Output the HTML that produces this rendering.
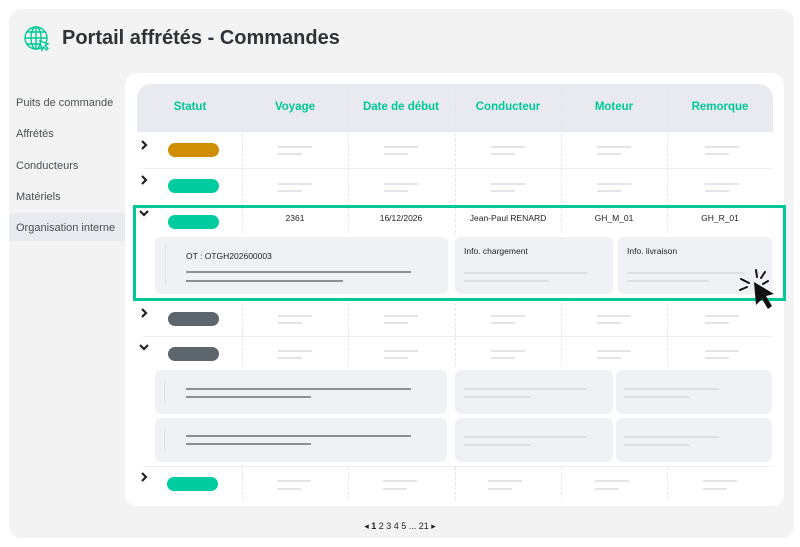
<!DOCTYPE html>
<html><head><meta charset="utf-8"><style>
*{margin:0;padding:0;box-sizing:border-box}
body{width:800px;height:547px;background:#fff;font-family:"Liberation Sans",sans-serif;position:relative;overflow:hidden}
.a{position:absolute}
.card{left:9px;top:9px;width:785px;height:529px;background:#f3f3f4;border-radius:12px}
.title{left:62px;top:27px;font-size:20px;font-weight:bold;color:#2f3338}
.nav{left:16px;font-size:11px;color:#4a4f55}
.sel{left:9px;top:213px;width:116px;height:28px;background:#e8eaf0}
.panel{left:125px;top:73px;width:659px;height:433px;background:#fff;border-radius:12px}
.head{left:137px;top:84px;width:636px;height:48px;background:#e8eaf0;border-radius:14px 14px 0 0}
.th{top:101px;font-size:11.5px;font-weight:bold;color:#00c896;text-align:center;width:106px}
.vl{width:0;border-left:1px dashed #e4e6ea}
.hl{height:1px;background:#eceef0}
.pill{width:51px;height:14px;border-radius:7px}
.l1{height:2px;width:34px;background:#e2e4e7}
.l2{height:2px;width:24px;background:#e2e4e7}
.chev{left:140px}
.box{background:#eff1f4;border-radius:6px}
.td{font-size:8.5px;color:#1d1f22;text-align:center;width:106px;top:213px}
.dk{height:2px;background:#8c9095}
.lt{height:2px;background:#dcdfe3}
</style></head><body>
<div class="a card"></div>
<svg class="a" style="left:23px;top:25px" width="28" height="28" viewBox="0 0 28 28" fill="none" stroke="#00c896" stroke-width="1.4"><circle cx="13" cy="13" r="11"/><ellipse cx="13" cy="13" rx="5" ry="11"/><path d="M2 13h22M4 7h18M4 19h14M13 2v22"/><path d="M17 16l8 3-3 1.5 3 3-1.5 1.5-3-3L19 25z" fill="#fff"/></svg>
<div class="a title">Portail affrétés - Commandes</div>
<div class="a sel"></div>
<div class="a nav" style="top:97px">Puits de commande</div>
<div class="a nav" style="top:128px">Affrétés</div>
<div class="a nav" style="top:160px">Conducteurs</div>
<div class="a nav" style="top:191px">Matériels</div>
<div class="a nav" style="top:222px">Organisation interne</div>
<div class="a panel"></div>
<div class="a head"></div>
<div class="a th" style="left:137px">Statut</div>
<div class="a th" style="left:242px">Voyage</div>
<div class="a th" style="left:348px">Date de début</div>
<div class="a th" style="left:455px">Conducteur</div>
<div class="a th" style="left:561px">Moteur</div>
<div class="a th" style="left:667px">Remorque</div>
<div class="a vl" style="left:242px;top:84px;height:416px"></div>
<div class="a vl" style="left:348px;top:84px;height:416px"></div>
<div class="a vl" style="left:455px;top:84px;height:416px"></div>
<div class="a vl" style="left:561px;top:84px;height:416px"></div>
<div class="a vl" style="left:667px;top:84px;height:416px"></div>
<div class="a hl" style="left:143px;top:168px;width:630px"></div>
<div class="a hl" style="left:143px;top:336px;width:630px"></div>
<div class="a hl" style="left:143px;top:466px;width:630px"></div>
<svg class="a chev" style="top:140px" width="8" height="10"><path d="M2 1l4 4-4 4" fill="none" stroke="#222" stroke-width="2.2"/></svg>
<div class="a pill" style="left:168px;top:143px;background:#d08e04"></div>
<svg class="a chev" style="top:175px" width="8" height="10"><path d="M2 1l4 4-4 4" fill="none" stroke="#222" stroke-width="2.2"/></svg>
<div class="a pill" style="left:168px;top:179px;background:#00cc9f"></div>
<div class="a" style="left:133px;top:205px;width:653px;height:96px;background:#fff;border:3px solid #00c896"></div>
<div class="a vl" style="left:242px;top:208px;height:25px"></div>
<div class="a vl" style="left:348px;top:208px;height:25px"></div>
<div class="a vl" style="left:455px;top:208px;height:25px"></div>
<div class="a vl" style="left:561px;top:208px;height:25px"></div>
<div class="a vl" style="left:667px;top:208px;height:25px"></div>
<svg class="a" style="left:139px;top:209px" width="10" height="8"><path d="M1 2l4 4 4-4" fill="none" stroke="#222" stroke-width="2.2"/></svg>
<div class="a pill" style="left:168px;top:215px;background:#00cc9f"></div>
<div class="a td" style="left:242px">2361</div>
<div class="a td" style="left:348px">16/12/2026</div>
<div class="a td" style="left:455px">Jean-Paul RENARD</div>
<div class="a td" style="left:561px">GH_M_01</div>
<div class="a td" style="left:667px">GH_R_01</div>
<div class="a box" style="left:155px;top:237px;width:293px;height:57px"></div>
<div class="a" style="left:165px;top:246px;width:1px;height:40px;background:#e0e2e6"></div>
<div class="a" style="left:186px;top:251px;font-size:8.5px;color:#1d1f22">OT : OTGH202600003</div>
<div class="a dk" style="left:186px;top:271px;width:225px"></div>
<div class="a dk" style="left:186px;top:280px;width:157px"></div>
<div class="a box" style="left:455px;top:237px;width:158px;height:57px"></div>
<div class="a" style="left:464px;top:246px;font-size:8.5px;color:#1d1f22">Info. chargement</div>
<div class="a lt" style="left:464px;top:272px;width:123px"></div>
<div class="a lt" style="left:464px;top:280px;width:85px"></div>
<div class="a box" style="left:618px;top:237px;width:154px;height:57px"></div>
<div class="a" style="left:627px;top:246px;font-size:8.5px;color:#1d1f22">Info. livraison</div>
<div class="a lt" style="left:627px;top:272px;width:118px"></div>
<div class="a lt" style="left:627px;top:280px;width:82px"></div>
<svg class="a" style="left:738px;top:268px" width="42" height="46" viewBox="0 0 42 46"><g stroke="#111" stroke-width="2" stroke-linecap="round"><path d="M18 2l1 7M27 4l-4 6M3 11l8 4M2 22l7-3M30 13l-5 3"/></g><path d="M16 14l20 12-8 2 6 10-4 3-6-10-6 6z" fill="#111"/></svg>
<svg class="a chev" style="top:308px" width="8" height="10"><path d="M2 1l4 4-4 4" fill="none" stroke="#222" stroke-width="2.2"/></svg>
<div class="a pill" style="left:168px;top:312px;background:#5e666d"></div>
<svg class="a" style="left:139px;top:343px" width="10" height="8"><path d="M1 2l4 4 4-4" fill="none" stroke="#222" stroke-width="2.2"/></svg>
<div class="a pill" style="left:168px;top:347px;background:#5e666d"></div>
<div class="a" style="left:150px;top:368px;width:625px;height:97px;background:#fff"></div>
<div class="a box" style="left:155px;top:370px;width:292px;height:44px"></div>
<div class="a" style="left:164px;top:379px;width:1px;height:26px;background:#e0e2e6"></div>
<div class="a dk" style="left:186px;top:388px;width:225px"></div>
<div class="a dk" style="left:186px;top:396px;width:125px"></div>
<div class="a box" style="left:455px;top:370px;width:158px;height:44px"></div>
<div class="a lt" style="left:464px;top:388px;width:123px"></div>
<div class="a lt" style="left:464px;top:396px;width:67px"></div>
<div class="a box" style="left:616px;top:370px;width:156px;height:44px"></div>
<div class="a lt" style="left:624px;top:388px;width:95px"></div>
<div class="a lt" style="left:624px;top:396px;width:65px"></div>
<div class="a box" style="left:155px;top:418px;width:292px;height:44px"></div>
<div class="a" style="left:164px;top:427px;width:1px;height:26px;background:#e0e2e6"></div>
<div class="a dk" style="left:186px;top:435px;width:225px"></div>
<div class="a dk" style="left:186px;top:443px;width:125px"></div>
<div class="a box" style="left:455px;top:418px;width:158px;height:44px"></div>
<div class="a lt" style="left:464px;top:436px;width:123px"></div>
<div class="a lt" style="left:464px;top:444px;width:67px"></div>
<div class="a box" style="left:616px;top:418px;width:156px;height:44px"></div>
<div class="a lt" style="left:624px;top:436px;width:95px"></div>
<div class="a lt" style="left:624px;top:444px;width:65px"></div>
<svg class="a chev" style="top:472px" width="8" height="10"><path d="M2 1l4 4-4 4" fill="none" stroke="#222" stroke-width="2.2"/></svg>
<div class="a pill" style="left:167px;top:477px;background:#00cc9f"></div>
<div class="a l1" style="left:278px;top:146px"></div><div class="a l2" style="left:278px;top:153px"></div>
<div class="a l1" style="left:384px;top:146px"></div><div class="a l2" style="left:384px;top:153px"></div>
<div class="a l1" style="left:491px;top:146px"></div><div class="a l2" style="left:491px;top:153px"></div>
<div class="a l1" style="left:597px;top:146px"></div><div class="a l2" style="left:597px;top:153px"></div>
<div class="a l1" style="left:705px;top:146px"></div><div class="a l2" style="left:705px;top:153px"></div>
<div class="a l1" style="left:278px;top:183px"></div><div class="a l2" style="left:278px;top:190px"></div>
<div class="a l1" style="left:384px;top:183px"></div><div class="a l2" style="left:384px;top:190px"></div>
<div class="a l1" style="left:491px;top:183px"></div><div class="a l2" style="left:491px;top:190px"></div>
<div class="a l1" style="left:597px;top:183px"></div><div class="a l2" style="left:597px;top:190px"></div>
<div class="a l1" style="left:705px;top:183px"></div><div class="a l2" style="left:705px;top:190px"></div>
<div class="a l1" style="left:278px;top:315px"></div><div class="a l2" style="left:278px;top:322px"></div>
<div class="a l1" style="left:384px;top:315px"></div><div class="a l2" style="left:384px;top:322px"></div>
<div class="a l1" style="left:491px;top:315px"></div><div class="a l2" style="left:491px;top:322px"></div>
<div class="a l1" style="left:597px;top:315px"></div><div class="a l2" style="left:597px;top:322px"></div>
<div class="a l1" style="left:705px;top:315px"></div><div class="a l2" style="left:705px;top:322px"></div>
<div class="a l1" style="left:278px;top:350px"></div><div class="a l2" style="left:278px;top:357px"></div>
<div class="a l1" style="left:384px;top:350px"></div><div class="a l2" style="left:384px;top:357px"></div>
<div class="a l1" style="left:491px;top:350px"></div><div class="a l2" style="left:491px;top:357px"></div>
<div class="a l1" style="left:597px;top:350px"></div><div class="a l2" style="left:597px;top:357px"></div>
<div class="a l1" style="left:705px;top:350px"></div><div class="a l2" style="left:705px;top:357px"></div>
<div class="a l1" style="left:277px;top:480px"></div><div class="a l2" style="left:277px;top:488px"></div>
<div class="a l1" style="left:383px;top:480px"></div><div class="a l2" style="left:383px;top:488px"></div>
<div class="a l1" style="left:488px;top:480px"></div><div class="a l2" style="left:488px;top:488px"></div>
<div class="a l1" style="left:595px;top:480px"></div><div class="a l2" style="left:595px;top:488px"></div>
<div class="a l1" style="left:703px;top:480px"></div><div class="a l2" style="left:703px;top:488px"></div>
<div class="a" style="left:350px;top:521px;width:100px;text-align:center;font-size:9px;color:#222">◂ <b>1</b> 2 3 4 5 ... 21 ▸</div>
</body></html>
